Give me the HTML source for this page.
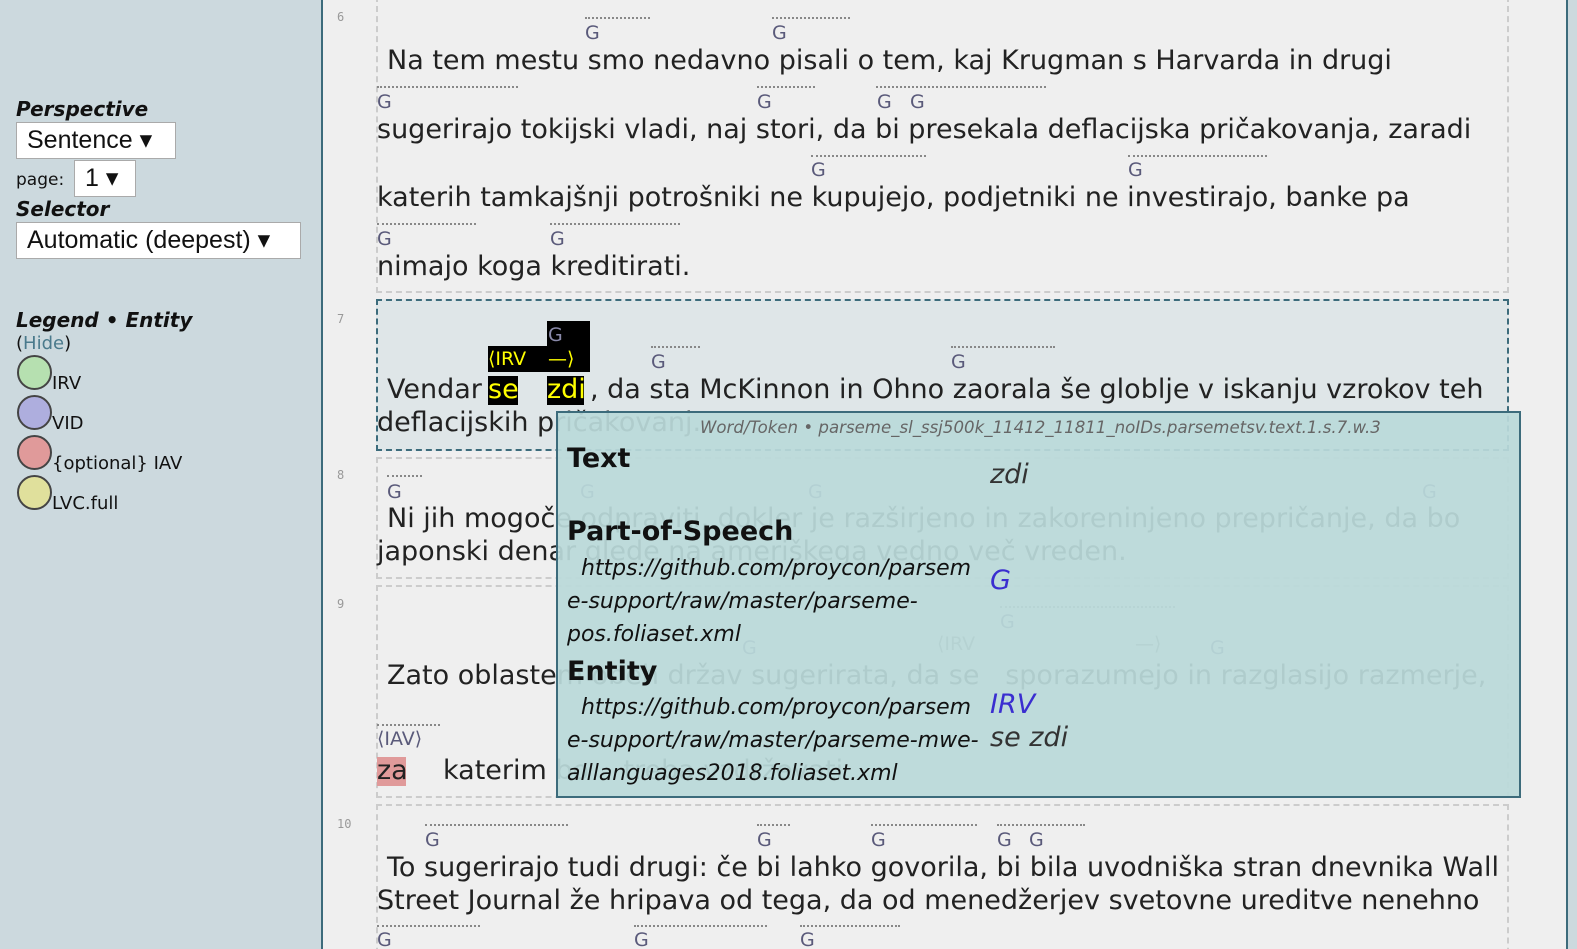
<!DOCTYPE html>
<html><head><meta charset="utf-8"><style>
*{margin:0;padding:0;box-sizing:border-box}
html,body{width:1577px;height:949px;overflow:hidden}
body{background:#efefef;position:relative;font-family:"DejaVu Sans","Liberation Sans",sans-serif;color:#222}
#side{position:absolute;left:0;top:0;width:323px;height:949px;background:#ccd9de;border-right:2px solid #3c6b7b}
#rside{position:absolute;left:1566px;top:0;width:11px;height:949px;background:#ccd9de;border-left:2px solid #3c6b7b}
.a{position:absolute;white-space:nowrap}
.h{font-weight:bold;font-style:italic;font-size:20px;color:#111}
.sel{position:absolute;background:#fff;border:1px solid #aaa;font-family:"Liberation Sans",sans-serif;font-size:25px;color:#111;padding-left:10px;line-height:34px}
.c{position:absolute;left:17px;width:35px;height:35px;border-radius:50%;border:2px solid #444}
.lg{position:absolute;left:52px;font-size:18px;color:#111}
.ln{position:absolute;left:337px;font-family:"DejaVu Sans Mono",monospace;font-size:12px;color:#999}
.box{position:absolute;left:376px;width:1133px;border:2px dashed #ccc}
.t{position:absolute;white-space:nowrap;font-size:27px;line-height:30px;color:#222}
.g{position:absolute;font-size:19px;line-height:20px;color:#5a5a7a}
.d{position:absolute;height:0;border-top:2px dotted #888}
#pop{position:absolute;left:556px;top:411px;width:965px;height:387px;background:rgba(186,217,217,0.93);border:2px solid #3c6b7b}
.pb{position:absolute;font-weight:bold;font-size:27px;color:#111;white-space:nowrap}
.pi{position:absolute;font-style:italic;font-size:22px;line-height:33px;color:#111;white-space:nowrap}
.pv{position:absolute;font-style:italic;font-size:27px;color:#333;white-space:nowrap}
</style></head><body>
<div id="side">
<div class="a h" style="left:16px;top:97px">Perspective</div>
<div class="sel" style="left:16px;top:122px;width:160px;height:37px">Sentence ▾</div>
<div class="a" style="left:16px;top:170px;font-size:17px;color:#111">page:</div>
<div class="sel" style="left:74px;top:160px;width:62px;height:37px">1 ▾</div>
<div class="a h" style="left:16px;top:197px">Selector</div>
<div class="sel" style="left:16px;top:222px;width:285px;height:37px">Automatic (deepest) ▾</div>
<div class="a h" style="left:16px;top:308px">Legend • Entity</div>
<div class="a" style="left:16px;top:333px;font-size:18px;color:#111">(<span style="color:#4a7a8c">Hide</span>)</div>
<div class="c" style="top:355px;background:#b6e0b0"></div><div class="lg" style="top:373px">IRV</div>
<div class="c" style="top:395px;background:#aeaede"></div><div class="lg" style="top:413px">VID</div>
<div class="c" style="top:435px;background:#e09a9a"></div><div class="lg" style="top:453px">{optional} IAV</div>
<div class="c" style="top:475px;background:#e0e09c"></div><div class="lg" style="top:493px">LVC.full</div>
</div>
<div id="rside"></div>

<!-- sentence 6 -->
<div class="ln" style="top:10px">6</div>
<div class="box" style="top:-4px;height:297px"></div>
<div class="d" style="left:585px;top:17px;width:65px"></div><div class="g" style="left:585px;top:23px">G</div>
<div class="d" style="left:772px;top:17px;width:78px"></div><div class="g" style="left:772px;top:23px">G</div>
<div class="t" style="left:387px;top:46px">Na tem mestu smo nedavno pisali o tem, kaj Krugman s Harvarda in drugi</div>
<div class="d" style="left:377px;top:86px;width:141px"></div><div class="d" style="left:757px;top:86px;width:58px"></div><div class="d" style="left:876px;top:86px;width:170px"></div>
<div class="g" style="left:377px;top:92px">G</div><div class="g" style="left:757px;top:92px">G</div><div class="g" style="left:877px;top:92px">G</div><div class="g" style="left:910px;top:92px">G</div>
<div class="t" style="left:377px;top:115px">sugerirajo tokijski vladi, naj stori, da bi presekala deflacijska pričakovanja, zaradi</div>
<div class="d" style="left:811px;top:155px;width:115px"></div><div class="d" style="left:1128px;top:155px;width:139px"></div>
<div class="g" style="left:811px;top:160px">G</div><div class="g" style="left:1128px;top:160px">G</div>
<div class="t" style="left:377px;top:183px">katerih tamkajšnji potrošniki ne kupujejo, podjetniki ne investirajo, banke pa</div>
<div class="d" style="left:377px;top:223px;width:99px"></div><div class="d" style="left:550px;top:223px;width:130px"></div>
<div class="g" style="left:377px;top:229px">G</div><div class="g" style="left:550px;top:229px">G</div>
<div class="t" style="left:377px;top:252px">nimajo koga kreditirati.</div>

<!-- sentence 7 -->
<div class="ln" style="top:312px">7</div>
<div class="box" style="top:299px;height:152px;border-color:#3c6b7b;background:#dfe6e8"></div>
<div class="a" style="left:547px;top:321px;width:43px;height:51px;background:#000"></div>
<div class="a" style="left:488px;top:346px;width:102px;height:26px;background:#000"></div>
<div class="g" style="left:548px;top:325px;color:#8a8aaa">G</div>
<div class="a" style="left:488px;top:348px;font-size:19px;color:#ff0">⟨IRV</div>
<div class="a" style="left:548px;top:348px;font-size:19px;color:#ff0">—⟩</div>
<div class="d" style="left:651px;top:346px;width:49px"></div><div class="g" style="left:651px;top:352px">G</div>
<div class="d" style="left:951px;top:346px;width:104px"></div><div class="g" style="left:951px;top:352px">G</div>
<div class="a" style="left:488px;top:376px;width:30px;height:29px;background:#000"></div>
<div class="a" style="left:547px;top:376px;width:37px;height:29px;background:#000"></div>
<div class="t" style="left:387px;top:375px">Vendar</div>
<div class="t" style="left:488px;top:375px;color:#ff0">se</div>
<div class="t" style="left:547px;top:375px;color:#ff0">zdi</div>
<div class="t" style="left:590px;top:375px">, da sta McKinnon in Ohno zaorala še globlje v iskanju vzrokov teh</div>
<div class="t" style="left:377px;top:408px">deflacijskih pričakovanj.</div>

<!-- sentence 8 -->
<div class="ln" style="top:468px">8</div>
<div class="box" style="top:457px;height:122px"></div>
<div class="d" style="left:387px;top:475px;width:35px"></div><div class="g" style="left:387px;top:482px">G</div>
<div class="g" style="left:580px;top:482px">G</div><div class="g" style="left:808px;top:482px">G</div><div class="g" style="left:1422px;top:482px">G</div>
<div class="t" style="left:387px;top:504px">Ni jih mogoče odpraviti, dokler je razširjeno in zakoreninjeno prepričanje, da bo</div>
<div class="t" style="left:377px;top:537px">japonski denar glede na ameriškega vedno več vreden.</div>

<!-- sentence 9 -->
<div class="ln" style="top:597px">9</div>
<div class="box" style="top:585px;height:213px"></div>
<div class="d" style="left:1000px;top:606px;width:175px"></div><div class="g" style="left:1000px;top:612px">G</div>
<div class="g" style="left:742px;top:638px">G</div><div class="a" style="left:937px;top:633px;font-size:19px;color:#777">⟨IRV</div><div class="a" style="left:1135px;top:633px;font-size:19px;color:#777">—⟩</div><div class="g" style="left:1210px;top:638px">G</div>
<div class="t" style="left:387px;top:661px">Zato oblastem obeh držav sugerirata, da se &nbsp;&nbsp;sporazumejo in razglasijo razmerje,</div>
<div class="d" style="left:377px;top:724px;width:63px"></div>
<div class="a" style="left:377px;top:728px;font-size:19px;color:#5a5a7a">⟨IAV⟩</div>
<div class="a" style="left:377px;top:757px;width:29px;height:29px;background:#e09a9a"></div>
<div class="t" style="left:377px;top:756px">za</div>
<div class="t" style="left:443px;top:756px">katerim bo &nbsp;&nbsp;&nbsp;treba vzdrževati</div>

<!-- sentence 10 -->
<div class="ln" style="top:817px">10</div>
<div class="box" style="top:804px;height:160px"></div>
<div class="d" style="left:425px;top:824px;width:143px"></div><div class="g" style="left:425px;top:830px">G</div>
<div class="d" style="left:757px;top:824px;width:33px"></div><div class="g" style="left:757px;top:830px">G</div>
<div class="d" style="left:871px;top:824px;width:106px"></div><div class="g" style="left:871px;top:830px">G</div>
<div class="d" style="left:997px;top:824px;width:88px"></div><div class="g" style="left:997px;top:830px">G</div><div class="g" style="left:1029px;top:830px">G</div>
<div class="t" style="left:387px;top:853px">To sugerirajo tudi drugi: če bi lahko govorila, bi bila uvodniška stran dnevnika Wall</div>
<div class="t" style="left:377px;top:886px">Street Journal že hripava od tega, da od menedžerjev svetovne ureditve nenehno</div>
<div class="d" style="left:377px;top:925px;width:103px"></div><div class="d" style="left:634px;top:925px;width:133px"></div><div class="d" style="left:800px;top:925px;width:100px"></div>
<div class="g" style="left:377px;top:930px">G</div><div class="g" style="left:634px;top:930px">G</div><div class="g" style="left:800px;top:930px">G</div>

<!-- popup -->
<div id="pop">
<div class="a" style="left:142px;top:5px;font-style:italic;font-size:16.6px;color:#666">Word/Token • parseme_sl_ssj500k_11412_11811_noIDs.parsemetsv.text.1.s.7.w.3</div>
<div class="pb" style="left:9px;top:30px">Text</div>
<div class="pv" style="left:432px;top:46px">zdi</div>
<div class="pb" style="left:9px;top:103px">Part-of-Speech</div>
<div class="pi" style="left:9px;top:139px">&nbsp;&nbsp;https://github.com/proycon/parsem<br>e-support/raw/master/parseme-<br>pos.foliaset.xml</div>
<div class="pv" style="left:432px;top:152px;color:#3a2ed0">G</div>
<div class="pb" style="left:9px;top:243px">Entity</div>
<div class="pi" style="left:9px;top:278px">&nbsp;&nbsp;https://github.com/proycon/parsem<br>e-support/raw/master/parseme-mwe-<br>alllanguages2018.foliaset.xml</div>
<div class="pv" style="left:432px;top:276px;color:#3a2ed0">IRV</div>
<div class="pv" style="left:432px;top:309px">se zdi</div>
</div>
</body></html>
